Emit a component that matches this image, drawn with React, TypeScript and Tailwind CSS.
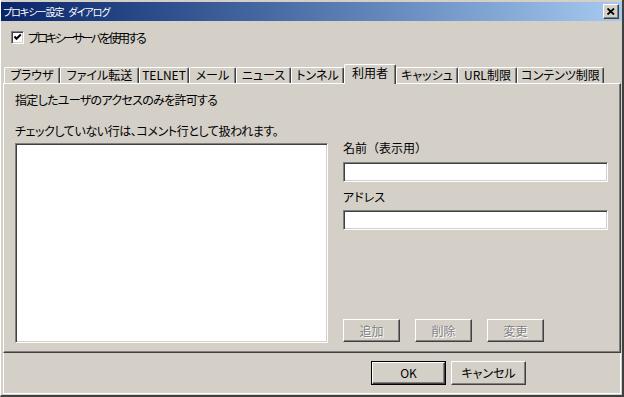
import React from 'react';

const font = "font-['Noto_Sans_CJK_JP',sans-serif] [font-feature-settings:'palt']";

const tabs = [
  { label: 'ブラウザ', w: 'w-[56px]' },
  { label: 'ファイル転送', w: 'w-[79px]' },
  { label: 'TELNET', w: 'w-[50px]' },
  { label: 'メール', w: 'w-[47px]' },
  { label: 'ニュース', w: 'w-[55px]' },
  { label: 'トンネル', w: 'w-[53px]' },
  { label: '利用者', w: 'w-[52px]', active: true },
  { label: 'キャッシュ', w: 'w-[62px]' },
  { label: 'URL制限', w: 'w-[59px]' },
  { label: 'コンテンツ制限', w: 'w-[87px]' },
];

function Field({ className = '' }: { className?: string }) {
  return (
    <div
      className={`bg-white border border-t-[#808080] border-l-[#808080] border-r-white border-b-white shadow-[inset_1px_1px_0_#404040,inset_-1px_-1px_0_#d4d0c8] ${className}`}
    />
  );
}

function Button({
  label,
  disabled,
  isDefault,
  className = '',
}: {
  label: string;
  disabled?: boolean;
  isDefault?: boolean;
  className?: string;
}) {
  const inner = (
    <div
      className={`h-full w-full flex items-center justify-center border border-t-white border-l-white border-r-[#404040] border-b-[#404040] shadow-[inset_-1px_-1px_0_#808080] text-[12px] leading-[16px] ${
        disabled ? 'text-[#808080] [text-shadow:1px_1px_0_#ffffff]' : 'text-black'
      }`}
    >
      {label}
    </div>
  );
  if (isDefault) {
    return <div className={`border border-black ${className}`}>{inner}</div>;
  }
  return <div className={className}>{inner}</div>;
}

export default function App() {
  return (
    <div
      className={`${font} w-[624px] h-[397px] bg-[#d4d0c8] border-l border-l-white border-r-2 border-r-[#404040] border-b-2 border-b-[#404040] flex flex-col text-black select-none overflow-hidden`}
    >
      {/* Title bar */}
      <div className="mt-[2px] h-[19px] bg-linear-to-r from-[#0a246a] to-[#a6caf0] flex items-center justify-between pl-[2px] pr-[3px]">
        <div className="text-white text-[10px] leading-[14px] tracking-[-1px] flex">
          <span>プロキシー設定</span>
          <span className="ml-[5px]">ダイアログ</span>
        </div>
        <div className="w-[16px] h-[15px] bg-[#d4d0c8] border border-t-white border-l-white border-r-[#404040] border-b-[#404040] shadow-[inset_-1px_-1px_0_#808080] flex items-center justify-center">
          <svg width="8" height="7" viewBox="0 0 8 7">
            <path d="M0.5 0.5 L7 6.5 M7 0.5 L0.5 6.5" stroke="#000" strokeWidth="1.8" />
          </svg>
        </div>
      </div>

      {/* Use proxy checkbox */}
      <div className="mt-[10px] ml-[10px] flex items-center gap-[4px] h-[13px]">
        <div className="w-[13px] h-[13px] bg-white border border-t-[#808080] border-l-[#808080] border-r-white border-b-white shadow-[inset_1px_1px_0_#404040,inset_-1px_-1px_0_#d4d0c8] flex items-center justify-center">
          <svg width="9" height="9" viewBox="0 0 9 9">
            <path d="M1.5 3.5 L3.5 5.8 L7.8 1.5" stroke="#000" strokeWidth="2" fill="none" />
          </svg>
        </div>
        <span className="text-[12px] leading-[16px] tracking-[-2.4px]">プロキシーサーバを使用する</span>
      </div>

      {/* Tabs */}
      <div className="mt-[20px] ml-[3px] h-[19px] flex items-end">
        {tabs.map((t) =>
          t.active ? (
            <div
              key={t.label}
              className={`${t.w} h-[20px] -mb-[1px] relative z-10 bg-[#d4d0c8] border-l border-t border-l-white border-t-white border-r border-r-[#404040] shadow-[inset_-1px_0_0_#808080] rounded-t-[2px] flex justify-center text-[12px] leading-[16px]`}
            >
              {t.label}
            </div>
          ) : (
            <div
              key={t.label}
              className={`${t.w} h-[16px] bg-[#d4d0c8] border-l border-t border-l-white border-t-white border-r border-r-[#404040] shadow-[inset_-1px_0_0_#808080] rounded-t-[2px] flex justify-center text-[12px] leading-[14px]`}
            >
              {t.label}
            </div>
          )
        )}
      </div>

      {/* Tab panel */}
      <div className="ml-[2px] mr-[1px] h-[270px] border-l border-t border-l-white border-t-white border-r border-b border-r-[#404040] border-b-[#404040] shadow-[inset_-1px_-1px_0_#808080] pl-[11px] pr-[11px] pt-[8px] flex flex-col">
        <div className="text-[12px] leading-[16px] tracking-[-0.7px]">指定したユーザのアクセスのみを許可する</div>
        <div className="mt-[15px] text-[12px] leading-[16px] tracking-[-0.4px]">チェックしていない行は、コメント行として扱われます。</div>
        <div className="mt-[1px] flex gap-[15px]">
          <Field className="mt-[3px] w-[313px] h-[200px]" />
          <div className="w-[265px] flex flex-col">
            <div className="text-[12px] leading-[16px] [font-feature-settings:normal]">名前（表示用）</div>
            <Field className="mt-[6px] h-[20px]" />
            <div className="mt-[7px] text-[12px] leading-[16px]">アドレス</div>
            <Field className="mt-[5px] h-[20px]" />
            <div className="mt-[89px] flex gap-[15px]">
              <Button label="追加" disabled className="w-[57px] h-[23px]" />
              <Button label="削除" disabled className="w-[57px] h-[23px]" />
              <Button label="変更" disabled className="w-[57px] h-[23px]" />
            </div>
          </div>
        </div>
      </div>

      {/* Bottom buttons */}
      <div className="flex-1 ml-[2px] mr-[1px] mb-[1px] border-l border-r border-b border-white flex justify-end items-start pt-[8px] pr-[94px] gap-[5px]">
        <Button label="OK" isDefault className="w-[75px] h-[24px]" />
        <Button label="キャンセル" className="w-[75px] h-[24px]" />
      </div>
    </div>
  );
}
